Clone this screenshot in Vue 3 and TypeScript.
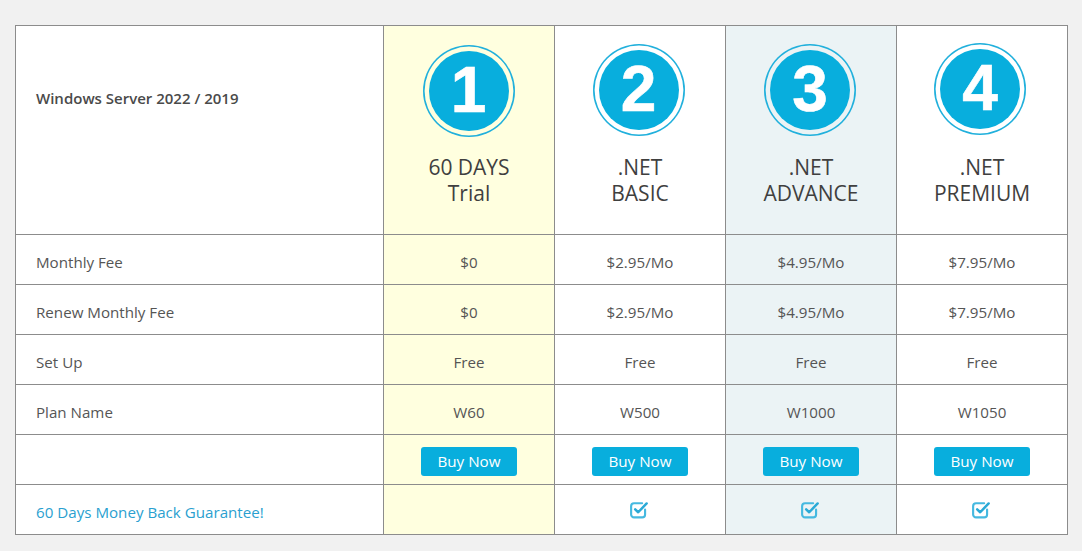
<script setup lang="ts">
interface Plan {
  num: number
  lines: string[]
  monthly: string
  renew: string
  setup: string
  name: string
  guarantee: boolean
  tone: string
}
const plans: Plan[] = [
  { num: 1, lines: ['60 DAYS', 'Trial'], monthly: '$0', renew: '$0', setup: 'Free', name: 'W60', guarantee: false, tone: 'yellow' },
  { num: 2, lines: ['.NET', 'BASIC'], monthly: '$2.95/Mo', renew: '$2.95/Mo', setup: 'Free', name: 'W500', guarantee: true, tone: 'white' },
  { num: 3, lines: ['.NET', 'ADVANCE'], monthly: '$4.95/Mo', renew: '$4.95/Mo', setup: 'Free', name: 'W1000', guarantee: true, tone: 'blue' },
  { num: 4, lines: ['.NET', 'PREMIUM'], monthly: '$7.95/Mo', renew: '$7.95/Mo', setup: 'Free', name: 'W1050', guarantee: true, tone: 'white' },
]
const rows: { label: string; key: 'monthly' | 'renew' | 'setup' | 'name' }[] = [
  { label: 'Monthly Fee', key: 'monthly' },
  { label: 'Renew Monthly Fee', key: 'renew' },
  { label: 'Set Up', key: 'setup' },
  { label: 'Plan Name', key: 'name' },
]
</script>

<template>
  <div class="page">
    <table class="pricing">
      <colgroup>
        <col class="col-label" />
        <col v-for="p in plans" :key="p.num" class="col-plan" />
      </colgroup>
      <tbody>
        <tr class="head">
          <th class="title">Windows Server 2022 / 2019</th>
          <td v-for="p in plans" :key="p.num" :class="p.tone">
            <div class="badge" :class="`badge-${p.num}`"><span>{{ p.num }}</span></div>
            <div class="plan-name">
              <div v-for="l in p.lines" :key="l">{{ l }}</div>
            </div>
          </td>
        </tr>
        <tr v-for="r in rows" :key="r.key">
          <td class="label">{{ r.label }}</td>
          <td v-for="p in plans" :key="p.num" :class="p.tone">{{ p[r.key] }}</td>
        </tr>
        <tr>
          <td class="label"></td>
          <td v-for="p in plans" :key="p.num" :class="p.tone">
            <button class="buy" type="button">Buy Now</button>
          </td>
        </tr>
        <tr>
          <td class="label link">60 Days Money Back Guarantee!</td>
          <td v-for="p in plans" :key="p.num" :class="p.tone">
            <svg v-if="p.guarantee" class="check" viewBox="0 0 16 16" width="18" height="18" fill="none" stroke="#45b9e0" stroke-width="1.9" stroke-linecap="round" stroke-linejoin="round">
              <path d="M13.4 7.6v4.4a2.6 2.6 0 0 1-2.6 2.6H3.6A2.6 2.6 0 0 1 1 12V4.6A2.6 2.6 0 0 1 3.6 2h7.2" />
              <path d="M4.6 7.4 7.3 10 14.8 2.2" stroke-width="2.2" stroke="#2aa9d6" />
            </svg>
          </td>
        </tr>
      </tbody>
    </table>
  </div>
</template>

<style>
html, body {
  margin: 0;
  background: #f1f1f1;
}
</style>

<style scoped>
.page {
  height: 551px;
  padding: 25px 14px 0 15px;
  box-sizing: border-box;
  overflow: hidden;
  font-family: "Open Sans", "Noto Sans", sans-serif;
}
.pricing {
  width: 1053px;
  table-layout: fixed;
  border-collapse: collapse;
  background: #fff;
  color: #555;
  font-size: 15.15px;
}
.col-label { width: 368px; }
.col-plan { width: 171px; }
td, th {
  border: 1px solid #8c8c8c;
  height: 49px;
  padding: 0;
  box-sizing: content-box;
  text-align: center;
  vertical-align: middle;
  font-weight: 400;
}
.head td, .head th {
  height: 208px;
  vertical-align: top;
}
.title {
  text-align: left;
  padding: 62px 0 0 20px;
  box-sizing: border-box;
  font-weight: 600;
  font-size: 15px;
  line-height: 20px;
  color: #4a4a4a;
}
.label {
  text-align: left;
  padding: 5px 0 0 20px;
  box-sizing: border-box;
  height: 50px;
}
tr:not(.head) td {
  padding-top: 5px;
  box-sizing: border-box;
  height: 50px;
}
.link { color: #2a9fd0; }
.yellow { background: #ffffdf; }
.blue { background: #ebf3f5; }
.white { background: #fff; }
.badge {
  width: 92px;
  height: 92px;
  box-sizing: border-box;
  box-shadow: inset 0 0 0 1.6px #21b0dc;
  border-radius: 50%;
  padding: 6px;
}
.badge-1 { margin: 19px 0 17px 38.5px; }
.badge-2 { margin: 18px 0 18px 37.5px; }
.badge-3 { margin: 18px 0 18px 38px; }
.badge-4 { margin: 17px 0 19px 37px; }
.badge span {
  display: flex;
  align-items: center;
  justify-content: center;
  width: 100%;
  height: 100%;
  padding-bottom: 2px;
  box-sizing: border-box;
  border-radius: 50%;
  background: #08aedd;
  color: #fff;
  font-family: "Liberation Sans", Arial, sans-serif;
  font-weight: 700;
  font-size: 64px;
  line-height: 1;
  -webkit-text-stroke: 0.6px #fff;
}
.plan-name {
  font-size: 21px;
  line-height: 26px;
  color: #3f3f3f;
}
.buy {
  display: inline-block;
  width: 96px;
  height: 29px;
  margin-top: -2px;
  border: 0;
  border-radius: 3px;
  background: #08aedd;
  color: #fff;
  font-family: inherit;
  font-size: 15.2px;
  padding: 0;
  vertical-align: middle;
}
.check {
  display: inline-block;
  vertical-align: middle;
  margin: -8px 2px 0 0;
}
</style>
